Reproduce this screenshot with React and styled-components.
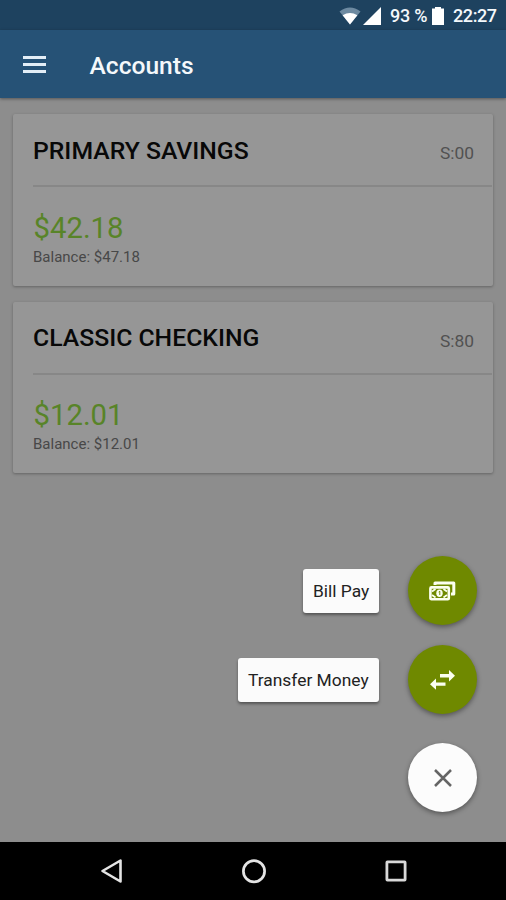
import styled, { createGlobalStyle } from "styled-components"

const GlobalStyle = createGlobalStyle`
    body{
        margin:0;
        background:#8d8d8d;
        font-family:Roboto, "Liberation Sans", sans-serif;
    }
`

const Screen = styled.div`
    display:flex;
    flex-direction:column;
    width:506px;
    height:900px;
    overflow:hidden;
    background:#8d8d8d;
`

const StatusBar = styled.div`
    display:flex;
    align-items:center;
    justify-content:flex-end;
    height:30px;
    padding:2px 9px 0 0;
    box-sizing:border-box;
    background:#1e425f;
    color:#f4f8fb;
    font-size:18px;
    font-weight:500;
    line-height:28px;
    white-space:nowrap;

    svg{
        display:block;
    }
`

const Percent = styled.span`
    margin:0 5px 0 9px;
    width:37px;
    letter-spacing:-.2px;
`

const Clock = styled.span`
    margin-left:9px;
    width:44px;
    letter-spacing:-.4px;
`

const AppBar = styled.header`
    display:flex;
    align-items:center;
    height:68px;
    padding:0 23px;
    background:#265276;
    box-shadow:0 1px 3px rgba(0, 0, 0, .4);
    position:relative;
`

const MenuIcon = styled.div`
    display:flex;
    flex-direction:column;
    gap:4px;
    width:23px;
    margin-right:43.5px;

    span{
        height:3px;
        background:#e3eef7;
    }
`

const Title = styled.h1`
    margin:3px 0 0;
    color:#f4f8fb;
    font-size:24.6px;
    font-weight:500;
    line-height:30px;
`

const Content = styled.main`
    display:flex;
    flex-direction:column;
    flex:1;
    gap:16px;
    padding:16px 13px 30px;
    box-sizing:border-box;
`

const Card = styled.section`
    height:171.5px;
    border-radius:2px;
    background:#969696;
    box-shadow:0 1px 3px rgba(0, 0, 0, .3);
    box-sizing:border-box;
    padding-left:20px;
    padding-right:1px;
`

const CardHeader = styled.div`
    display:flex;
    align-items:center;
    justify-content:space-between;
    height:73px;
    padding:0 18px 0 0;
    box-sizing:border-box;
    border-bottom:2px solid #878787;
`

const AccountName = styled.h2`
    margin:2px 0 0;
    color:#080808;
    font-size:24.75px;
    font-weight:500;
    line-height:30px;
`

const Suffix = styled.span`
    margin-top:7px;
    color:#515151;
    font-size:17.4px;
    line-height:22px;
`

const Amount = styled.div`
    padding:22.5px 0 0 .5px;
    color:#588428;
    font-size:29.3px;
    line-height:36px;
`

const Balance = styled.div`
    color:#484848;
    font-size:15px;
    line-height:22px;
`

const Actions = styled.div`
    display:flex;
    flex-direction:column;
    align-items:flex-end;
    margin-top:auto;
    padding-right:16px;
`

const Action = styled.div`
    display:flex;
    align-items:center;
    gap:29px;
    margin-bottom:${props => props.$space || 0}px;
`

const Label = styled.span`
    height:44px;
    padding:0 10px;
    border-radius:3px;
    background:#fbfbfb;
    box-shadow:0 2px 3px rgba(0, 0, 0, .4);
    color:#222;
    font-size:17.4px;
    line-height:44px;
    white-space:nowrap;
    width:${props => props.$width}px;
    box-sizing:border-box;
`

const Fab = styled.button`
    display:flex;
    align-items:center;
    justify-content:center;
    width:69px;
    height:69px;
    padding:0;
    border:0;
    border-radius:50%;
    background:${props => props.$light ? "#fcfcfc" : "#6f8900"};
    box-shadow:0 2px 5px rgba(0, 0, 0, .4);
`

const NavBar = styled.nav`
    display:flex;
    align-items:center;
    justify-content:space-between;
    height:58px;
    padding:0 99px 0 100px;
    background:#000;
`

const accounts = [
    { name: "PRIMARY SAVINGS", suffix: "S:00", amount: "$42.18", balance: "$47.18" },
    { name: "CLASSIC CHECKING", suffix: "S:80", amount: "$12.01", balance: "$12.01" },
]

const WifiIcon = () => (
    <svg width="22" height="18" viewBox="0 0 22 18">
        <path d="M0.5 4.5Q11-3.5 21.5 4.5L11 17.5Z" fill="#6d8aa1" />
        <path d="M3.6 8.3Q11 3.5 18.4 8.3L11 17.5Z" fill="#fff" />
    </svg>
)

const SignalIcon = () => (
    <svg width="20" height="18" viewBox="-2 0 20 18">
        <path d="M18 0V18H0Z" fill="#fff" />
    </svg>
)

const BatteryIcon = () => (
    <svg width="12" height="18" viewBox="0 0 12 18">
        <path d="M3 0H9V1.5H12V18H0V1.5H3Z" fill="#fff" />
    </svg>
)

const MoneyIcon = () => (
    <svg width="27" height="20" viewBox="0 0 27 20">
        <path d="M6 4V2H24.8V13H22" fill="none" stroke="#fbfff0" strokeWidth="3" strokeLinejoin="round" />
        <rect x="1.4" y="6.4" width="18.4" height="11.8" rx="1" fill="none" stroke="#fbfff0" strokeWidth="2.6" />
        <path d="M3 10.5L6.5 8M14.5 8L18 10.5M3 14L6.5 16.5M14.5 16.5L18 14" stroke="#fbfff0" strokeWidth="1.8" />
        <ellipse cx="10.5" cy="12.2" rx="3.2" ry="3.7" fill="#fbfff0" />
        <path d="M9.7 11L10.8 10.3V14" fill="none" stroke="#6f8900" strokeWidth="1" />
    </svg>
)

const TransferIcon = () => (
    <svg width="25" height="20" viewBox="0 0 25 20" fill="#fbfff0">
        <path d="M10 4H19V0L25 5.7L19 11.4V7.4H10Z" />
        <path d="M15.5 12.4H6V8.6L0 14.2L6 19.8V15.8H15.5Z" />
    </svg>
)

const CloseIcon = () => (
    <svg width="18" height="18" viewBox="0 0 18 18">
        <path d="M1 1L17 17M17 1L1 17" stroke="#656565" strokeWidth="2.5" />
    </svg>
)

const App = () => {
    return <Screen>
        <GlobalStyle />
        <StatusBar>
            <WifiIcon />
            <SignalIcon />
            <Percent>93 %</Percent>
            <BatteryIcon />
            <Clock>22:27</Clock>
        </StatusBar>

        <AppBar>
            <MenuIcon>
                <span />
                <span />
                <span />
            </MenuIcon>
            <Title>Accounts</Title>
        </AppBar>

        <Content>
            {accounts.map(account => (
                <Card key={account.name}>
                    <CardHeader>
                        <AccountName>{account.name}</AccountName>
                        <Suffix>{account.suffix}</Suffix>
                    </CardHeader>
                    <Amount>{account.amount}</Amount>
                    <Balance>Balance: {account.balance}</Balance>
                </Card>
            ))}

            <Actions>
                <Action $space={20}>
                    <Label $width={76}>Bill Pay</Label>
                    <Fab aria-label="Bill Pay"><MoneyIcon /></Fab>
                </Action>
                <Action $space={29}>
                    <Label $width={141}>Transfer Money</Label>
                    <Fab aria-label="Transfer Money"><TransferIcon /></Fab>
                </Action>
                <Fab $light aria-label="Close"><CloseIcon /></Fab>
            </Actions>
        </Content>

        <NavBar>
            <svg width="23" height="26" viewBox="0 0 23 26">
                <path d="M20.5 2.5V23.5L2.5 13Z" fill="none" stroke="#e4e4e4" strokeWidth="2.6" strokeLinejoin="round" />
            </svg>
            <svg width="25" height="25" viewBox="0 0 25 25">
                <circle cx="12" cy="12.2" r="10.6" fill="none" stroke="#e4e4e4" strokeWidth="2.7" />
            </svg>
            <svg width="22" height="22" viewBox="0 0 22 22">
                <rect x="1.9" y="1.9" width="18.2" height="18.2" rx=".5" fill="none" stroke="#d8d8d8" strokeWidth="2.8" />
            </svg>
        </NavBar>
    </Screen>
}

export default App
